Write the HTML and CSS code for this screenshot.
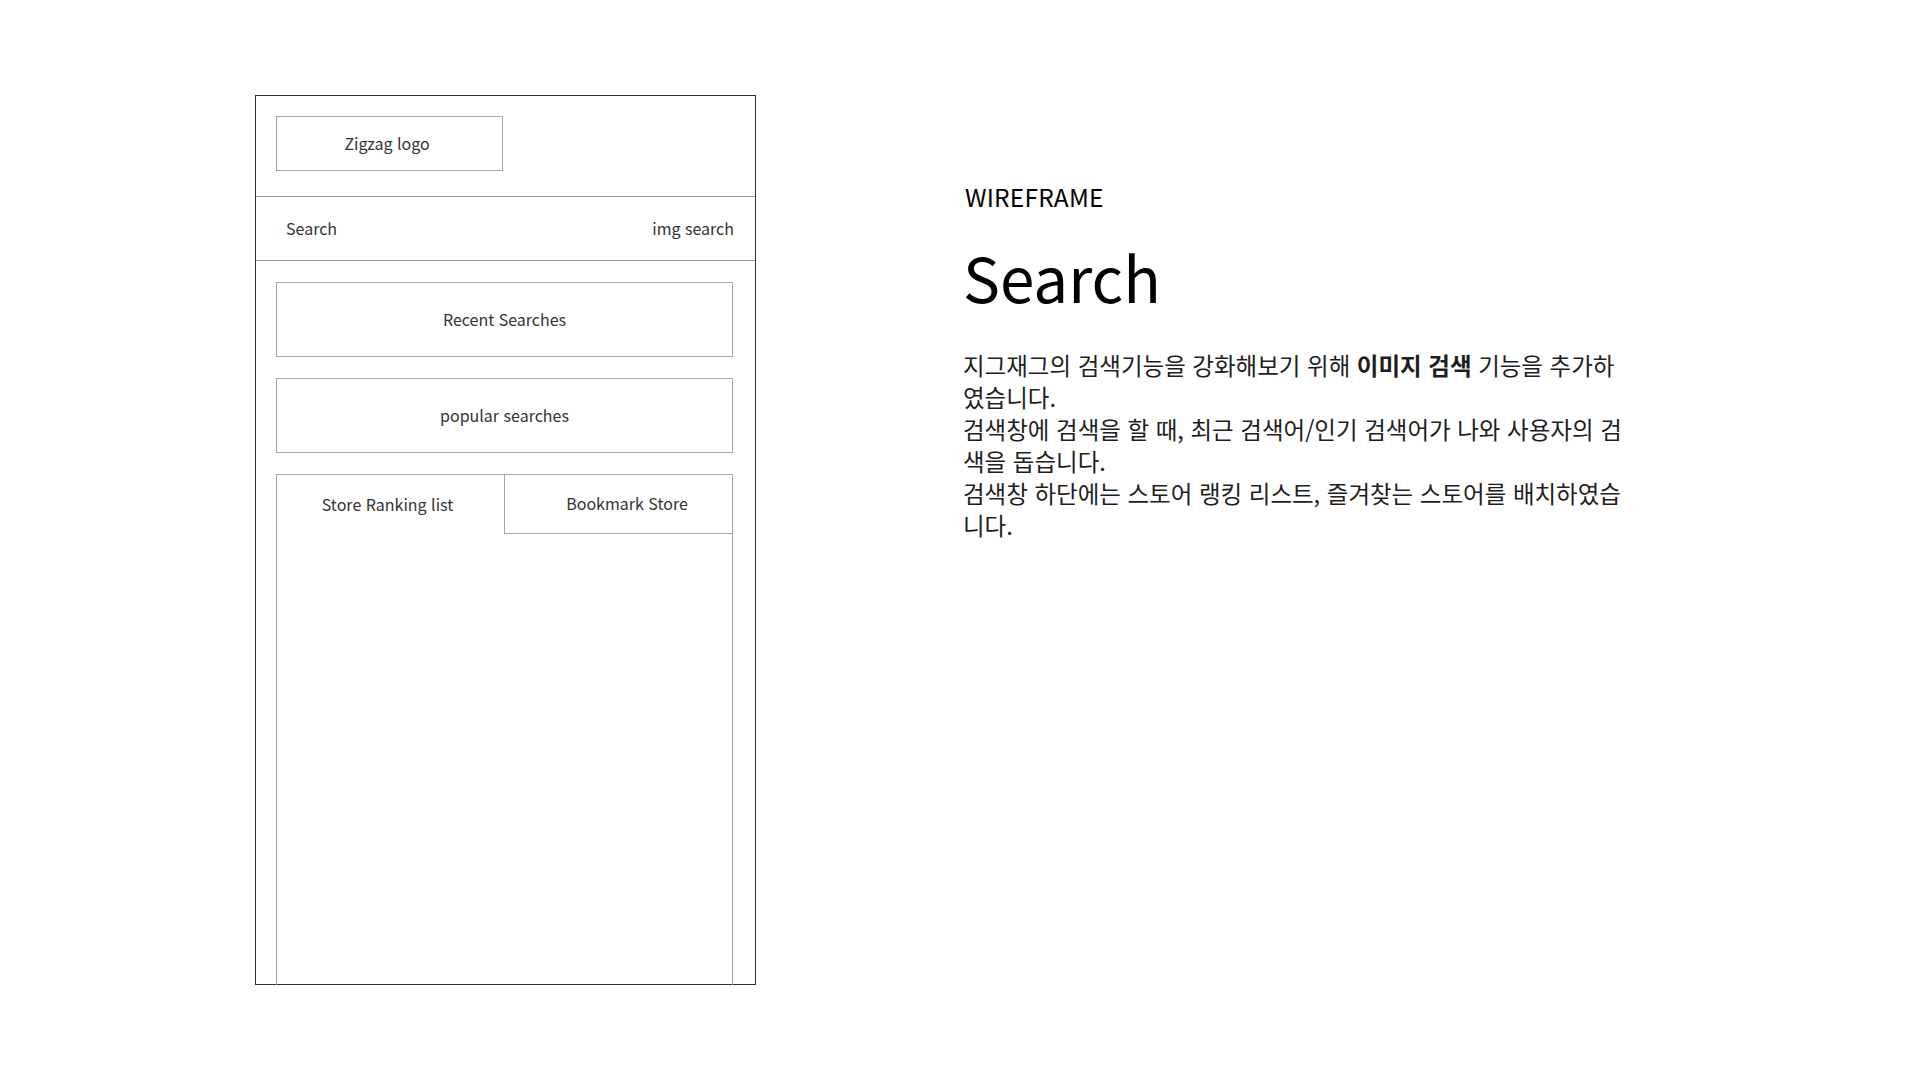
FILE: index.html
```html
<!DOCTYPE html>
<html lang="ko">
<head>
<meta charset="utf-8">
<title>Wireframe - Search</title>
<link rel="stylesheet" href="styles.css">
</head>
<body>
<main class="slide">
  <section class="phone">
    <header class="phone-header">
      <div class="logo-box">Zigzag logo</div>
    </header>
    <div class="search-row">
      <span class="search-label">Search</span>
      <span class="img-search">img search</span>
    </div>
    <div class="phone-body">
      <div class="block">Recent Searches</div>
      <div class="block">popular searches</div>
      <div class="tabs">
        <div class="tab-bar">
          <div class="tab tab-active">Store Ranking list</div>
          <div class="tab tab-inactive">Bookmark Store</div>
        </div>
        <div class="tab-panel"></div>
      </div>
    </div>
  </section>
  <section class="desc">
    <p class="eyebrow">WIREFRAME</p>
    <h1 class="title">Search</h1>
    <p class="body-text">지그재그의 검색기능을 강화해보기 위해 <strong>이미지 검색</strong> 기능을 추가하였습니다.<br>검색창에 검색을 할 때, 최근 검색어/인기 검색어가 나와 사용자의 검색을 돕습니다.<br>검색창 하단에는 스토어 랭킹 리스트, 즐겨찾는 스토어를 배치하였습니다.</p>
  </section>
</main>
</body>
</html>
```
FILE: styles.css
```css
* { box-sizing: border-box; }
html, body {
  margin: 0;
  padding: 0;
  background: #ffffff;
}
body {
  width: 1920px;
  height: 1080px;
  overflow: hidden;
  font-family: "Noto Sans CJK KR", "Noto Sans", sans-serif;
  color: #000;
}
.slide {
  display: flex;
  align-items: flex-start;
  padding: 95px 0 0 255px;
  gap: 207px;
}
.phone {
  width: 501px;
  height: 890px;
  border: 1px solid #2e2e2e;
  display: flex;
  flex-direction: column;
  color: #333;
  font-size: 16px;
}
.phone-header {
  height: 101px;
  padding: 20px 0 0 20px;
  border-bottom: 1px solid #9a9a9a;
}
.logo-box {
  width: 227px;
  height: 55px;
  border: 1px solid #a6a6a6;
  display: flex;
  align-items: center;
  justify-content: center;
  padding: 0 5px 2px 0;
}
.search-row {
  height: 64px;
  border-bottom: 1px solid #9a9a9a;
  display: flex;
  align-items: center;
  justify-content: space-between;
  padding: 0 21px 2px 30px;
}
.phone-body {
  flex: 1;
  display: flex;
  flex-direction: column;
  gap: 21px;
  padding: 21px 22px 0 20px;
  min-height: 0;
}
.block {
  height: 75px;
  border: 1px solid #a6a6a6;
  display: flex;
  align-items: center;
  justify-content: center;
  padding-bottom: 2px;
}
.tabs {
  flex: 1;
  display: flex;
  flex-direction: column;
  border: 1px solid #a6a6a6;
  border-bottom: none;
  margin-bottom: -1px;
}
.tab-bar {
  display: flex;
  height: 59px;
}
.tab {
  display: flex;
  align-items: center;
  justify-content: center;
  padding-bottom: 2px;
}
.tab-active {
  width: 227px;
  padding-right: 6px;
}
.tab-inactive {
  flex: 1;
  border-left: 1px solid #a6a6a6;
  border-bottom: 1px solid #a6a6a6;
  padding-left: 17px;
}
.tab-panel {
  flex: 1;
}
.desc {
  width: 668px;
  padding-top: 86px;
}
.eyebrow {
  margin: 0 0 0 2px;
  font-size: 24.5px;
  line-height: 32px;
  letter-spacing: 0.2px;
}
.title {
  margin: 25px 0 0 0;
  font-size: 62px;
  font-weight: 400;
  line-height: 76px;
}
.body-text {
  margin: 35px 0 0 0;
  font-size: 23.5px;
  line-height: 32px;
  color: #1e1e1e;
}
.body-text strong {
  font-weight: 700;
}
```
